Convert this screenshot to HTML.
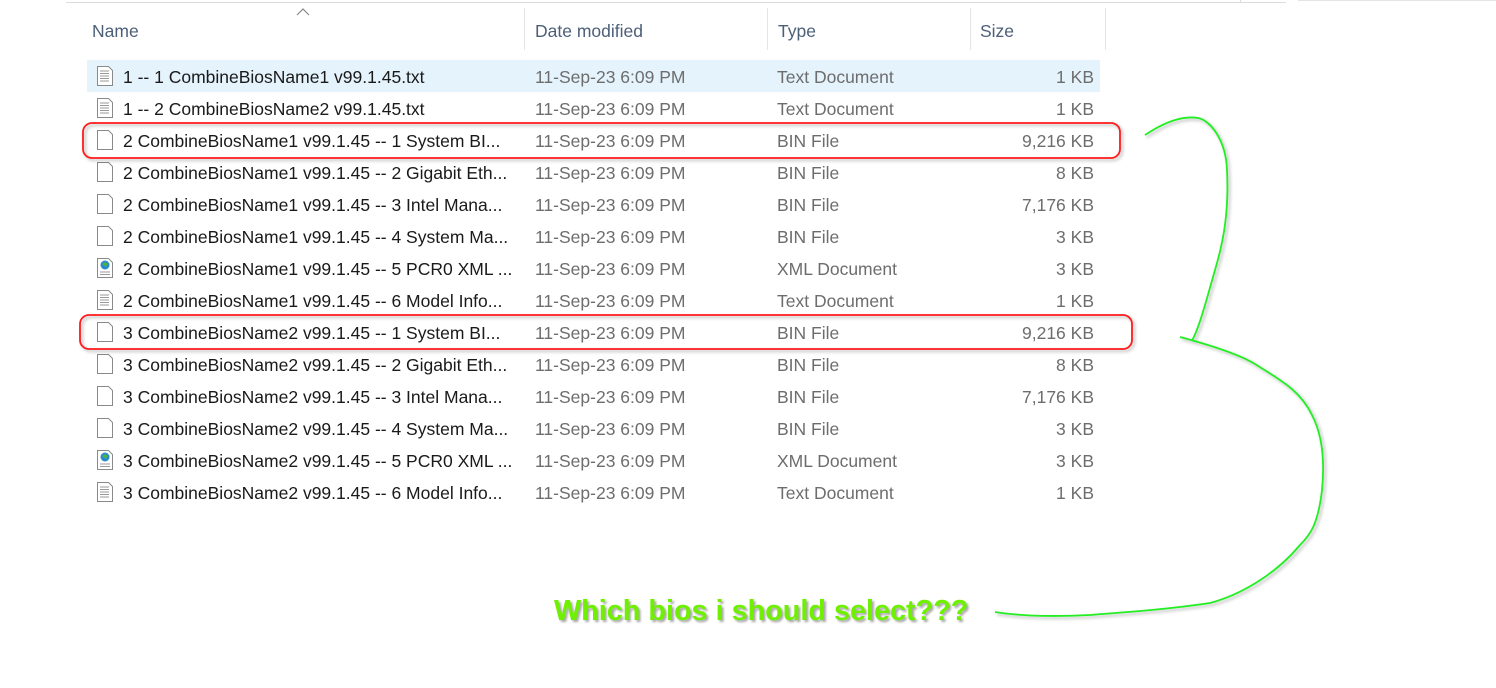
<!DOCTYPE html>
<html><head><meta charset="utf-8"><style>
html,body{margin:0;padding:0;background:#fff;width:1496px;height:688px;overflow:hidden;position:relative;font-family:"Liberation Sans",sans-serif}
.hdr{position:absolute;top:21px;font-size:17.5px;color:#4c5f79}
.sep{position:absolute;top:8px;width:1px;height:42px;background:#e5e5e5}
.row{position:absolute;left:87px;width:1013px;height:32px;font-size:17.5px}
.row span{position:absolute;top:7px;white-space:nowrap}
.n{left:36px;color:#1a1a1a}.d{left:448px;color:#6d6d6d}.t{left:690px;color:#6d6d6d}.s{right:6px;color:#6d6d6d}
.ic{position:absolute;left:9px;top:5px}
</style></head><body>
<div style="position:absolute;left:66px;top:2px;width:1220px;height:1px;background:#dcdcdc"></div>
<div style="position:absolute;left:1240px;top:0;width:1px;height:3px;background:#dcdcdc"></div>
<div style="position:absolute;left:1298px;top:0;width:198px;height:1px;background:#e5e5e5"></div>
<svg style="position:absolute;left:296px;top:8px" width="14" height="8"><path d="M1 7 L7 1 L13 7" fill="none" stroke="#888" stroke-width="1.2"/></svg>
<div class="hdr" style="left:92px">Name</div>
<div class="sep" style="left:524px"></div>
<div class="hdr" style="left:535px">Date modified</div>
<div class="sep" style="left:767px"></div>
<div class="hdr" style="left:778px">Type</div>
<div class="sep" style="left:970px"></div>
<div class="hdr" style="left:980px">Size</div>
<div class="sep" style="left:1105px"></div>

<div class="row" style="top:60px;background:#e5f3fd"><svg class="ic" width="18" height="22"><path d="M1.5 1.5h11l4 4v15h-15z" fill="#fff" stroke="#8a8a8a"/><path d="M4 6h9M4 8.5h9M4 11h9M4 13.5h9M4 16h9" stroke="#999"/></svg><span class="n">1 -- 1 CombineBiosName1 v99.1.45.txt</span><span class="d">11-Sep-23 6:09 PM</span><span class="t">Text Document</span><span class="s">1 KB</span></div>
<div class="row" style="top:92px"><svg class="ic" width="18" height="22"><path d="M1.5 1.5h11l4 4v15h-15z" fill="#fff" stroke="#8a8a8a"/><path d="M4 6h9M4 8.5h9M4 11h9M4 13.5h9M4 16h9" stroke="#999"/></svg><span class="n">1 -- 2 CombineBiosName2 v99.1.45.txt</span><span class="d">11-Sep-23 6:09 PM</span><span class="t">Text Document</span><span class="s">1 KB</span></div>
<div class="row" style="top:124px"><svg class="ic" width="18" height="22"><path d="M1.5 1.5h11l4 4v15h-15z" fill="#fff" stroke="#8a8a8a"/></svg><span class="n">2 CombineBiosName1 v99.1.45 -- 1 System BI...</span><span class="d">11-Sep-23 6:09 PM</span><span class="t">BIN File</span><span class="s">9,216 KB</span></div>
<div class="row" style="top:156px"><svg class="ic" width="18" height="22"><path d="M1.5 1.5h11l4 4v15h-15z" fill="#fff" stroke="#8a8a8a"/></svg><span class="n">2 CombineBiosName1 v99.1.45 -- 2 Gigabit Eth...</span><span class="d">11-Sep-23 6:09 PM</span><span class="t">BIN File</span><span class="s">8 KB</span></div>
<div class="row" style="top:188px"><svg class="ic" width="18" height="22"><path d="M1.5 1.5h11l4 4v15h-15z" fill="#fff" stroke="#8a8a8a"/></svg><span class="n">2 CombineBiosName1 v99.1.45 -- 3 Intel Mana...</span><span class="d">11-Sep-23 6:09 PM</span><span class="t">BIN File</span><span class="s">7,176 KB</span></div>
<div class="row" style="top:220px"><svg class="ic" width="18" height="22"><path d="M1.5 1.5h11l4 4v15h-15z" fill="#fff" stroke="#8a8a8a"/></svg><span class="n">2 CombineBiosName1 v99.1.45 -- 4 System Ma...</span><span class="d">11-Sep-23 6:09 PM</span><span class="t">BIN File</span><span class="s">3 KB</span></div>
<div class="row" style="top:252px"><svg class="ic" width="18" height="22"><path d="M1.5 1.5h11l4 4v15h-15z" fill="#fff" stroke="#8a8a8a"/><circle cx="9" cy="8" r="4.5" fill="#2a8ad0"/><path d="M6 7l3-2 3 2-2 3z" fill="#4cb04c"/><path d="M4 15h10M4 17.5h10" stroke="#999"/></svg><span class="n">2 CombineBiosName1 v99.1.45 -- 5 PCR0 XML ...</span><span class="d">11-Sep-23 6:09 PM</span><span class="t">XML Document</span><span class="s">3 KB</span></div>
<div class="row" style="top:284px"><svg class="ic" width="18" height="22"><path d="M1.5 1.5h11l4 4v15h-15z" fill="#fff" stroke="#8a8a8a"/><path d="M4 6h9M4 8.5h9M4 11h9M4 13.5h9M4 16h9" stroke="#999"/></svg><span class="n">2 CombineBiosName1 v99.1.45 -- 6 Model Info...</span><span class="d">11-Sep-23 6:09 PM</span><span class="t">Text Document</span><span class="s">1 KB</span></div>
<div class="row" style="top:316px"><svg class="ic" width="18" height="22"><path d="M1.5 1.5h11l4 4v15h-15z" fill="#fff" stroke="#8a8a8a"/></svg><span class="n">3 CombineBiosName2 v99.1.45 -- 1 System BI...</span><span class="d">11-Sep-23 6:09 PM</span><span class="t">BIN File</span><span class="s">9,216 KB</span></div>
<div class="row" style="top:348px"><svg class="ic" width="18" height="22"><path d="M1.5 1.5h11l4 4v15h-15z" fill="#fff" stroke="#8a8a8a"/></svg><span class="n">3 CombineBiosName2 v99.1.45 -- 2 Gigabit Eth...</span><span class="d">11-Sep-23 6:09 PM</span><span class="t">BIN File</span><span class="s">8 KB</span></div>
<div class="row" style="top:380px"><svg class="ic" width="18" height="22"><path d="M1.5 1.5h11l4 4v15h-15z" fill="#fff" stroke="#8a8a8a"/></svg><span class="n">3 CombineBiosName2 v99.1.45 -- 3 Intel Mana...</span><span class="d">11-Sep-23 6:09 PM</span><span class="t">BIN File</span><span class="s">7,176 KB</span></div>
<div class="row" style="top:412px"><svg class="ic" width="18" height="22"><path d="M1.5 1.5h11l4 4v15h-15z" fill="#fff" stroke="#8a8a8a"/></svg><span class="n">3 CombineBiosName2 v99.1.45 -- 4 System Ma...</span><span class="d">11-Sep-23 6:09 PM</span><span class="t">BIN File</span><span class="s">3 KB</span></div>
<div class="row" style="top:444px"><svg class="ic" width="18" height="22"><path d="M1.5 1.5h11l4 4v15h-15z" fill="#fff" stroke="#8a8a8a"/><circle cx="9" cy="8" r="4.5" fill="#2a8ad0"/><path d="M6 7l3-2 3 2-2 3z" fill="#4cb04c"/><path d="M4 15h10M4 17.5h10" stroke="#999"/></svg><span class="n">3 CombineBiosName2 v99.1.45 -- 5 PCR0 XML ...</span><span class="d">11-Sep-23 6:09 PM</span><span class="t">XML Document</span><span class="s">3 KB</span></div>
<div class="row" style="top:476px"><svg class="ic" width="18" height="22"><path d="M1.5 1.5h11l4 4v15h-15z" fill="#fff" stroke="#8a8a8a"/><path d="M4 6h9M4 8.5h9M4 11h9M4 13.5h9M4 16h9" stroke="#999"/></svg><span class="n">3 CombineBiosName2 v99.1.45 -- 6 Model Info...</span><span class="d">11-Sep-23 6:09 PM</span><span class="t">Text Document</span><span class="s">1 KB</span></div>

<svg style="position:absolute;left:0;top:0" width="1496" height="688">
<defs><filter id="sh"><feDropShadow dx="2" dy="2" stdDeviation="1.5" flood-color="#000" flood-opacity="0.3"/></filter></defs>
<g filter="url(#sh)" fill="none" stroke-width="1.8">
<rect x="83" y="123" width="1037" height="35" rx="9" stroke="#ff1a1a"/>
<rect x="80" y="315" width="1052" height="34" rx="9" stroke="#ff1a1a"/>
<path d="M1145 135 C1160 125 1180 115 1198 118 C1210 120 1226 140 1227 170 C1229 210 1224 240 1215 270 C1205 305 1200 325 1192 341" stroke="#22ee22"/>
<path d="M1180 337 C1210 345 1240 355 1255 364 C1280 380 1300 390 1312 415 C1325 440 1324 470 1322 490 C1318 525 1310 535 1300 545 C1275 575 1240 595 1210 603 C1170 609 1130 612 1090 615 C1050 617 1020 616 995 612" stroke="#22ee22"/>
</g>
</svg>
<div style="position:absolute;left:554px;top:595px;font-family:'Liberation Sans',sans-serif;font-weight:bold;font-size:28.8px;color:#6ef000;text-shadow:2px 2px 2px rgba(0,0,0,0.35)">Which bios i should select???</div>
</body></html>
